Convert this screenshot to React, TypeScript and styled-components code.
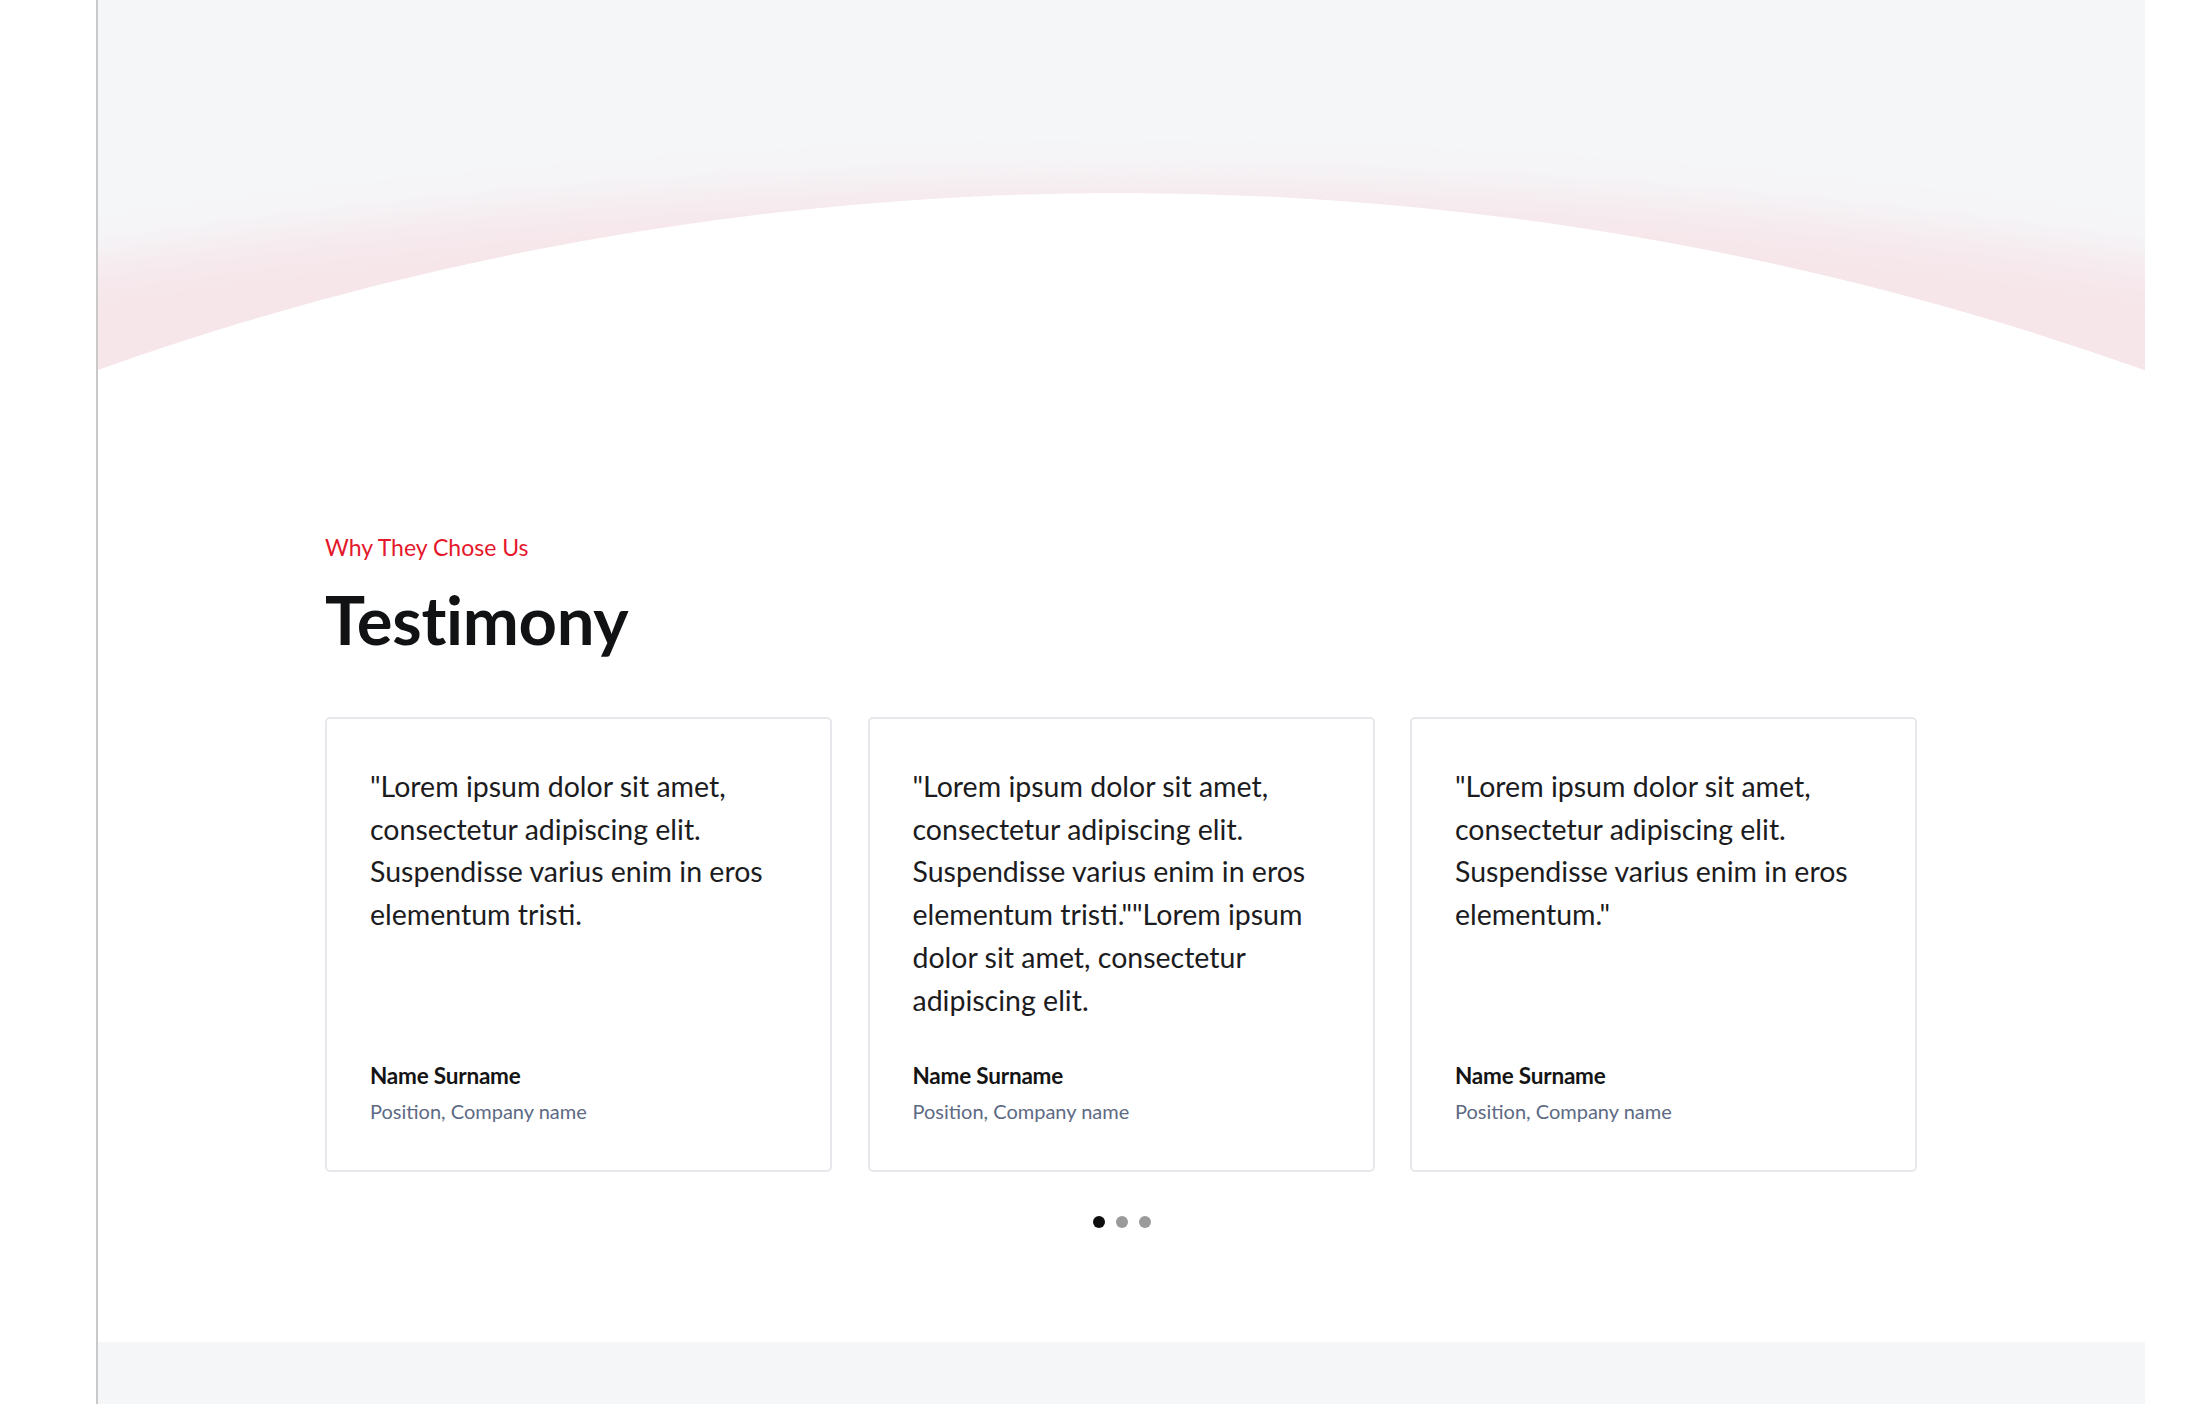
import React from "react";
import styled, { createGlobalStyle } from "styled-components";

const GlobalStyle = createGlobalStyle`
  html, body {
    margin: 0;
    padding: 0;
    background: #ffffff;
  }
  body {
    font-family: Lato, "Open Sans", "Liberation Sans", sans-serif;
    color: #151515;
    -webkit-font-smoothing: antialiased;
  }
  * { box-sizing: border-box; }
`;

const Page = styled.div`
  padding: 0 51px 0 96px;
  min-height: 1404px;
  display: flex;
`;

const Frame = styled.main`
  flex: 1;
  border-left: 2px solid #c9c9c9;
  display: flex;
  flex-direction: column;
  min-height: 1404px;
`;

const TestimonialSection = styled.section`
  position: relative;
  overflow: hidden;
  background: #ffffff;
  padding: 530px 0 114px;
`;

const Backdrop = styled.svg`
  position: absolute;
  top: 0;
  left: 0;
  width: 100%;
  height: 420px;
  z-index: 0;
  pointer-events: none;
`;

const Container = styled.div`
  position: relative;
  z-index: 1;
  width: 1592px;
  margin-left: 227px;
`;

const Eyebrow = styled.p`
  margin: 0;
  font-size: 23px;
  line-height: 34px;
  font-weight: 400;
  color: #e5172b;
`;

const Title = styled.h2`
  margin: 15px 0 0;
  font-size: 67px;
  line-height: 81px;
  font-weight: 700;
  color: #111214;
  letter-spacing: -0.3px;
`;

const CardGrid = styled.div`
  margin-top: 57px;
  display: grid;
  grid-template-columns: repeat(3, 1fr);
  column-gap: 35.5px;
`;

const Card = styled.article`
  display: flex;
  flex-direction: column;
  background: #ffffff;
  border: 2px solid #e6e8ec;
  border-radius: 5px;
  padding: 46px 43px 45px;
`;

const Quote = styled.p`
  margin: 0 0 39px;
  font-size: 28.5px;
  line-height: 42.7px;
  color: #1c1c1e;
`;

const Author = styled.div`
  margin-top: auto;
  display: flex;
  flex-direction: column;
  gap: 6px;
`;

const AuthorName = styled.span`
  font-size: 22.5px;
  line-height: 31px;
  font-weight: 700;
  color: #141414;
  letter-spacing: -0.2px;
`;

const AuthorRole = styled.span`
  font-size: 20px;
  line-height: 28px;
  color: #5d6a84;
`;

const Dots = styled.div`
  position: relative;
  z-index: 1;
  margin-top: 44px;
  display: flex;
  justify-content: center;
  gap: 11px;
`;

const Dot = styled.span<{ $active?: boolean }>`
  width: 12px;
  height: 12px;
  border-radius: 50%;
  background: ${(p) => (p.$active ? "#0d0d0d" : "#9a9a9a")};
`;

const NextSection = styled.section`
  flex: 1;
  background: #f5f6f8;
`;

const testimonials = [
  {
    quote:
      '"Lorem ipsum dolor sit amet, consectetur adipiscing elit. Suspendisse varius enim in eros elementum tristi.',
  },
  {
    quote:
      '"Lorem ipsum dolor sit amet, consectetur adipiscing elit. Suspendisse varius enim in eros elementum tristi.""Lorem ipsum dolor sit amet, consectetur adipiscing elit.',
  },
  {
    quote:
      '"Lorem ipsum dolor sit amet, consectetur adipiscing elit. Suspendisse varius enim in eros elementum."',
  },
];

export default function App() {
  return (
    <>
      <GlobalStyle />
      <Page>
        <Frame>
          <TestimonialSection>
            <Backdrop viewBox="0 0 2047 420" preserveAspectRatio="none" aria-hidden>
              <defs>
                <filter
                  id="glow"
                  filterUnits="userSpaceOnUse"
                  x="-300"
                  y="-300"
                  width="2647"
                  height="1100"
                >
                  <feGaussianBlur stdDeviation="24" />
                </filter>
              </defs>
              <rect x="0" y="0" width="2047" height="420" fill="#f5f6f8" />
              <circle cx="1023" cy="7017" r="6834" fill="#f6e6ea" filter="url(#glow)" />
              <circle cx="1023" cy="3238" r="3045" fill="#ffffff" />
            </Backdrop>
            <Container>
              <Eyebrow>Why They Chose Us</Eyebrow>
              <Title>Testimony</Title>
              <CardGrid>
                {testimonials.map((t, i) => (
                  <Card key={i}>
                    <Quote>{t.quote}</Quote>
                    <Author>
                      <AuthorName>Name Surname</AuthorName>
                      <AuthorRole>Position, Company name</AuthorRole>
                    </Author>
                  </Card>
                ))}
              </CardGrid>
            </Container>
            <Dots>
              <Dot $active />
              <Dot />
              <Dot />
            </Dots>
          </TestimonialSection>
          <NextSection />
        </Frame>
      </Page>
    </>
  );
}
